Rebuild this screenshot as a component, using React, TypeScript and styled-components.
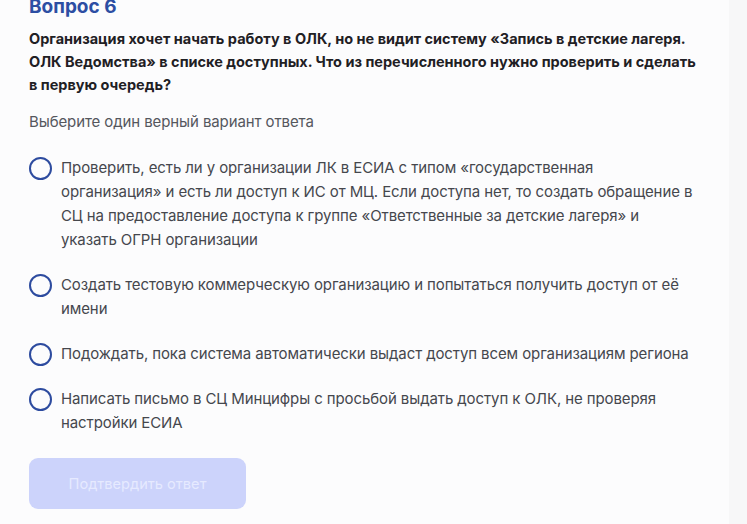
import React, { useState } from "react";
import styled, { createGlobalStyle } from "styled-components";

const GlobalStyle = createGlobalStyle`
  html, body {
    margin: 0;
    padding: 0;
    background: #fcfcfd;
  }
  body {
    font-family: Inter, "Noto Sans", "Liberation Sans", sans-serif;
    -webkit-font-smoothing: antialiased;
  }
`;

const Page = styled.div`
  display: flex;
  min-height: 524px;
  overflow: hidden;
`;

const Card = styled.main`
  flex: 1;
  padding: 0 29px;
  background: #fcfcfd;
`;

const SideStrip = styled.aside`
  width: 18px;
  background: #f7f7f8;
`;

const Heading = styled.h2`
  margin: -3px 0 0;
  font-size: 19px;
  line-height: 20px;
  font-weight: 700;
  color: #2c4ea3;
`;

const Question = styled.p`
  margin: 10px 0 0;
  font-size: 14.5px;
  line-height: 23px;
  font-weight: 700;
  letter-spacing: 0;
  color: #1f2024;
  white-space: nowrap;
`;

const Hint = styled.p`
  margin: 14px 0 0;
  font-size: 15px;
  line-height: 24px;
  letter-spacing: -0.1px;
  color: #55575d;
`;

const Options = styled.ul`
  list-style: none;
  margin: 22px 0 0;
  padding: 0;
  display: flex;
  flex-direction: column;
  gap: 21px;
`;

const Option = styled.li`
  display: flex;
  align-items: flex-start;
  gap: 9px;
  cursor: pointer;
`;

const Radio = styled.span<{ $checked: boolean }>`
  flex: none;
  box-sizing: border-box;
  width: 23px;
  height: 23px;
  margin-top: 1px;
  border-radius: 50%;
  border: 2px solid #2d4b9f;
  display: flex;
  align-items: center;
  justify-content: center;
  &::after {
    content: "";
    width: 11px;
    height: 11px;
    border-radius: 50%;
    background: ${(p) => (p.$checked ? "#2d4b9f" : "transparent")};
  }
`;

const OptionText = styled.span`
  font-size: 15px;
  line-height: 24px;
  letter-spacing: -0.1px;
  color: #45474d;
  max-width: 634px;
`;

const Submit = styled.button<{ $disabled: boolean }>`
  margin-top: 23px;
  width: 217px;
  height: 51px;
  border: none;
  border-radius: 9px;
  background: ${(p) => (p.$disabled ? "#ccd3fb" : "#4a64e8")};
  color: ${(p) => (p.$disabled ? "#e6eaff" : "#ffffff")};
  font-family: inherit;
  font-size: 14.6px;
  cursor: ${(p) => (p.$disabled ? "default" : "pointer")};
`;

const answers = [
  "Проверить, есть ли у организации ЛК в ЕСИА с типом «государственная организация» и есть ли доступ к ИС от МЦ. Если доступа нет, то создать обращение в СЦ на предоставление доступа к группе «Ответственные за детские лагеря» и указать ОГРН организации",
  "Создать тестовую коммерческую организацию и попытаться получить доступ от её имени",
  "Подождать, пока система автоматически выдаст доступ всем организациям региона",
  "Написать письмо в СЦ Минцифры с просьбой выдать доступ к ОЛК, не проверяя настройки ЕСИА",
];

export default function App() {
  const [selected, setSelected] = useState<number | null>(null);
  return (
    <>
      <GlobalStyle />
      <Page>
        <Card>
          <Heading>Вопрос 6</Heading>
          <Question>
            Организация хочет начать работу в ОЛК, но не видит систему «Запись в детские лагеря.
            <br />
            ОЛК Ведомства» в списке доступных. Что из перечисленного нужно проверить и сделать
            <br />
            в первую очередь?
          </Question>
          <Hint>Выберите один верный вариант ответа</Hint>
          <Options>
            {answers.map((a, i) => (
              <Option key={i} onClick={() => setSelected(i)}>
                <Radio $checked={selected === i} />
                <OptionText>{a}</OptionText>
              </Option>
            ))}
          </Options>
          <Submit $disabled={selected === null} disabled={selected === null}>
            Подтвердить ответ
          </Submit>
        </Card>
        <SideStrip />
      </Page>
    </>
  );
}
